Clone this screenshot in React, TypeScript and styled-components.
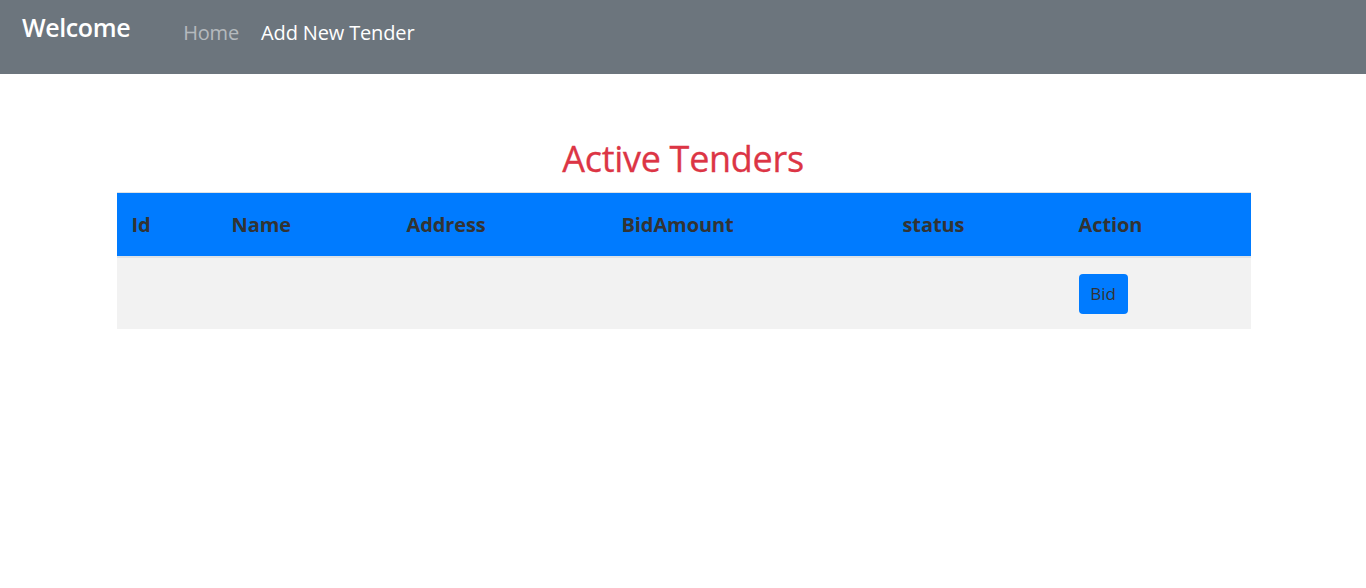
import React from "react";
import styled, { createGlobalStyle } from "styled-components";

const Global = createGlobalStyle`
  html, body { margin: 0; padding: 0; background: #fff; }
  body { font-family: "Segoe UI", "Open Sans", sans-serif; color: #212529; }
  * { box-sizing: border-box; }
`;

const NavBar = styled.nav`
  height: 74px;
  background: #6c757d;
  display: flex;
  align-items: flex-start;
  padding: 10px 22px 0;
`;

const Brand = styled.a`
  font-size: 25px;
  font-weight: 600;
  color: #fff;
  line-height: 34px;
  margin-right: 53px;
  letter-spacing: -0.4px;
`;

const NavLinks = styled.div`
  display: flex;
  gap: 22px;
  padding-top: 6px;
`;

const NavLink = styled.a<{ $active?: boolean }>`
  font-size: 20px;
  line-height: 34px;
  color: ${(p) => (p.$active ? "rgba(255,255,255,0.5)" : "#fff")};
  letter-spacing: -0.15px;
`;

const Main = styled.main`
  padding-top: 63px;
  display: flex;
  flex-direction: column;
  align-items: center;
`;

const Title = styled.h1`
  margin: 0 0 11px;
  font-size: 36px;
  font-weight: 400;
  color: #dc3545;
  line-height: 44px;
  letter-spacing: -0.3px;
  -webkit-text-stroke: 0.3px #dc3545;
`;

const Table = styled.table`
  width: 1134px;
  border-collapse: collapse;
  margin-left: 1px;
`;

const HeadCell = styled.th<{ $w: number }>`
  width: ${(p) => p.$w}px;
  background: #007bff;
  color: #333;
  text-align: left;
  font-size: 20px;
  font-weight: 700;
  padding: 0 15px;
  height: 64px;
  border-top: 1px solid #dee2e6;
  border-bottom: 2px solid #dee2e6;
  letter-spacing: -0.1px;
`;

const Cell = styled.td`
  background: #f2f2f2;
  height: 72px;
  padding: 0 15px;
`;

const BidButton = styled.button`
  background: #007bff;
  border: none;
  border-radius: 4px;
  color: #333;
  font-family: inherit;
  font-size: 17px;
  width: 49px;
  height: 40px;
  padding: 0;
  margin-top: 1px;
`;

const cols = [
  { label: "Id", w: 100 },
  { label: "Name", w: 175 },
  { label: "Address", w: 215 },
  { label: "BidAmount", w: 281 },
  { label: "status", w: 176 },
  { label: "Action", w: 187 },
];

export default function App() {
  return (
    <>
      <Global />
      <NavBar>
        <Brand>Welcome</Brand>
        <NavLinks>
          <NavLink $active>Home</NavLink>
          <NavLink>Add New Tender</NavLink>
        </NavLinks>
      </NavBar>
      <Main>
        <Title>Active Tenders</Title>
        <Table>
          <thead>
            <tr>
              {cols.map((c) => (
                <HeadCell key={c.label} $w={c.w}>
                  {c.label}
                </HeadCell>
              ))}
            </tr>
          </thead>
          <tbody>
            <tr>
              <Cell />
              <Cell />
              <Cell />
              <Cell />
              <Cell />
              <Cell>
                <BidButton>Bid</BidButton>
              </Cell>
            </tr>
          </tbody>
        </Table>
      </Main>
    </>
  );
}
